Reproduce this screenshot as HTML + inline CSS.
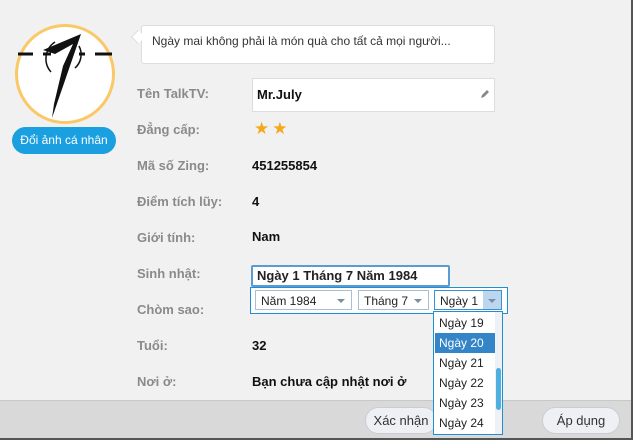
<!DOCTYPE html><html><head><meta charset="utf-8"><style>
*{box-sizing:border-box;margin:0;padding:0}
body{width:633px;height:440px;background:#f1f1f1;font-family:"Liberation Sans","DejaVu Sans",sans-serif;position:relative;overflow:hidden;font-size:13px}
.a{position:absolute}
.lab{position:absolute;left:137px;color:#8a8a8a;font-weight:bold;font-size:13px}
.val{position:absolute;left:252px;color:#111;font-weight:bold;font-size:13px}
.sel{position:absolute;top:290px;height:20px;border:1px solid #a9bfd6;background:#fff;font-size:12px;padding:3px 0 0 5px;color:#222}
.sel i{position:absolute;right:6px;top:8px;border:4px solid transparent;border-top:4px solid #7a8ea4;border-bottom:0}
.it{position:absolute;left:435px;width:60px;height:20px;font-size:12px;padding:3px 0 0 4px;color:#222}
.btn{position:absolute;top:407px;height:27px;border:1px solid #c9ced6;border-radius:14px;background:#eef0f4;font-size:13px;color:#333;text-align:center;padding-top:5px}
</style></head><body>
<div class="a" style="left:15px;top:24px;width:100px;height:100px;border-radius:50%;border:3px solid #fbc868;background:#fff"></div>
<svg class="a" style="left:15px;top:24px" width="100" height="100" viewBox="0 0 100 100">
<path d="M3 30H18M28 30H36M64 30H70M80 30H97" stroke="#111" stroke-width="3"/>
<path d="M28 26L66 10L46 68L37 94L39 80L48 42L58 20L40 30Z" fill="#111"/>
<path d="M36 48A20 20 0 0 1 40 18M64 22A18 18 0 0 1 60 44" stroke="#111" stroke-width="1.5" fill="none"/>
</svg>
<div class="a" style="left:12px;top:127px;width:104px;height:27px;border-radius:14px;background:#1a9fe0;color:#fff;font-size:12px;text-align:center;padding-top:6px">Đổi ảnh cá nhân</div>
<div class="a" style="left:141px;top:25px;width:354px;height:39px;background:#fff;border:1px solid #ddd;border-radius:3px;font-size:12px;color:#333;padding:8px 0 0 10px">Ngày mai không phải là món quà cho tất cả mọi người...</div>
<div class="a" style="left:133px;top:32px;width:10px;height:10px;background:#fff;border-left:1px solid #ddd;border-top:1px solid #ddd;transform:rotate(-45deg)"></div>
<div class="lab" style="top:86px">Tên TalkTV:</div>
<div class="a" style="left:252px;top:78px;width:243px;height:34px;background:#fff;border:1px solid #ddd"></div>
<div class="val" style="top:87px;left:257px">Mr.July</div>
<svg class="a" style="left:479px;top:88px" width="12" height="12"><path d="M2 10L3 7L8 2L10 4L5 9Z" fill="#888"/></svg>
<div class="lab" style="top:122px">Đẳng cấp:</div>
<div class="a" style="left:254px;top:119px;font-size:17px;color:#f4a81a;letter-spacing:3px">★★</div>
<div class="lab" style="top:158px">Mã số Zing:</div><div class="val" style="top:158px">451255854</div>
<div class="lab" style="top:194px">Điểm tích lũy:</div><div class="val" style="top:194px">4</div>
<div class="lab" style="top:230px">Giới tính:</div><div class="val" style="top:229px">Nam</div>
<div class="lab" style="top:266px">Sinh nhật:</div>
<div class="lab" style="top:302px">Chòm sao:</div>
<div class="lab" style="top:338px">Tuổi:</div><div class="val" style="top:338px">32</div>
<div class="lab" style="top:374px">Nơi ở:</div><div class="val" style="top:374px">Bạn chưa cập nhật nơi ở</div>
<div class="a" style="left:251px;top:265px;width:199px;height:22px;background:#fff;border:2px solid #5b9bd5;border-radius:2px;font-weight:bold;font-size:13px;padding:1px 0 0 4px;color:#222">Ngày 1 Tháng 7 Năm 1984</div>
<div class="a" style="left:0;top:400px;width:633px;height:40px;background:#d9d9d9;border-top:1px solid #c8c8c8"></div>
<div class="a" style="left:631px;top:0;width:2px;height:440px;background:#555"></div>
<div class="a" style="left:0;top:438px;width:633px;height:2px;background:#555"></div>
<div class="btn" style="left:365px;width:72px">Xác nhận</div>
<div class="btn" style="left:542px;width:78px">Áp dụng</div>
<div class="a" style="left:250px;top:287px;width:258px;height:27px;background:#fff;border:1px solid #1e8fd0"></div>
<div class="sel" style="left:255px;width:97px">Năm 1984<i></i></div>
<div class="sel" style="left:358px;width:71px">Tháng 7<i></i></div>
<div class="sel" style="left:434px;width:68px;border-color:#3c8fd0">Ngày 1<span class="a" style="left:48px;top:0;width:18px;height:18px;background:#bcd6ee"></span><i style="right:5px"></i></div>
<div class="a" style="left:433px;top:311px;width:70px;height:124px;background:#fff;border:1px solid #1e8fd0"></div>
<div class="a" style="left:495px;top:312px;width:7px;height:122px;background:#eef2f6"></div>
<div class="a" style="left:496px;top:368px;width:5px;height:42px;background:#4fb0df;border-radius:3px"></div>
<div class="a" style="left:435px;top:333px;width:60px;height:20px;background:#3485c8"></div>
<div class="it" style="top:313px">Ngày 19</div>
<div class="it" style="top:333px;color:#fff">Ngày 20</div>
<div class="it" style="top:353px">Ngày 21</div>
<div class="it" style="top:373px">Ngày 22</div>
<div class="it" style="top:393px">Ngày 23</div>
<div class="it" style="top:413px">Ngày 24</div>
</body></html>
